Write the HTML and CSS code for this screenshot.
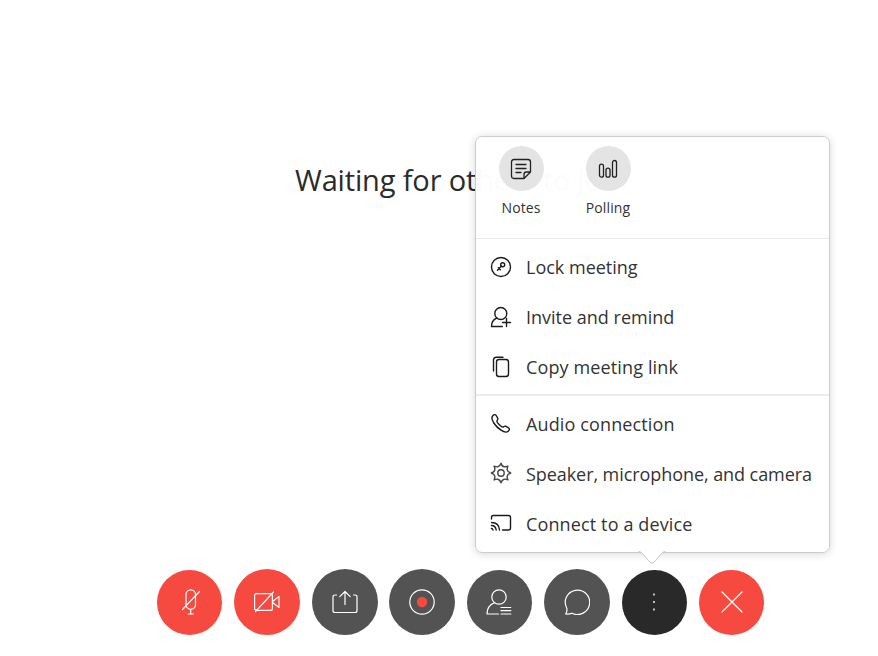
FILE: index.html
```
<!DOCTYPE html>
<html lang="en">
<head>
<meta charset="utf-8">
<title>Meeting</title>
<link rel="stylesheet" href="styles.css">
</head>
<body>
<main class="stage">
  <h1 class="status">Waiting for others to join</h1>
  <nav class="controls">
    <button class="ctl red" aria-label="Unmute"><svg width="26" height="26" viewBox="0 0 26 26"><rect x="9" y=".8" width="9.500" height="19.500" rx="4.700"/><path d="M5.500 20.500 22.500 2.500M13.700 20.500v4M11 25h5.400"/></svg></button>
    <button class="ctl red big" aria-label="Start video"><svg width="26" height="26" viewBox="0 0 26 26"><rect x=".6" y="4.600" width="17.800" height="16.800" rx="2"/><path d="m18.500 12.500 6.500-5v11l-6.500-5M1.500 22.500 19.500 3"/></svg></button>
    <button class="ctl wide" aria-label="Share"><svg width="26" height="26" viewBox="0 0 26 26"><path d="M4.500 6H3Q1 6 1 8v13.500q0 2 2 2h20q2 0 2-2V8q0-2-2-2h-1.500M13 15.500V2.500M7.800 7.700 13 2.500l5.200 5.200"/></svg></button>
    <button class="ctl wide" aria-label="Record"><svg width="26" height="26" viewBox="0 0 26 26"><circle cx="13" cy="13" r="12.200"/><circle class="dot" cx="13" cy="13" r="5.200"/></svg></button>
    <button class="ctl" aria-label="Participants"><svg width="26" height="26" viewBox="0 0 26 26"><circle cx="13" cy="8" r="7.200"/><path d="M8.500 13.800C4 15.500 1 19 1 25h11.500M15 18.500h9.800M15 21.700h9.800M15 25h9.800"/></svg></button>
    <button class="ctl wide" aria-label="Chat"><svg width="26" height="26" viewBox="0 0 26 26"><path d="M8 24.200A12.200 12.200 0 1 0 2.800 19.200C3.300 21.500 2.800 23.200 1.700 25 4 25.200 6 25 8 24.200Z"/></svg></button>
    <button class="ctl dark" aria-label="More options"><svg width="26" height="26" viewBox="0 0 26 26"><path class="pips" d="M12.300 4.500h1.400v2h-1.400zM12.300 12h1.400v2h-1.400zM12.300 19.500h1.400v2h-1.400z"/></svg></button>
    <button class="ctl red" aria-label="Leave"><svg width="26" height="26" viewBox="0 0 26 26"><path d="m3 3 20 20M23 3 3 23"/></svg></button>
  </nav>
</main>
<aside class="menu">
  <div class="tools">
    <div class="tool"><span class="disc"><svg width="22" height="22" viewBox="0 0 22 22"><path d="M14 20.500H4Q1.500 20.500 1.500 18V4Q1.500 1.500 4 1.500h14q2.500 0 2.500 2.500v10L14 20.500V16.500q0-2.500 2.500-2.500h4M6 6.500h10M6 10.500h10M6 14.500h5"/></svg></span><span class="label">Notes</span></div>
    <div class="tool"><span class="disc"><svg width="22" height="22" viewBox="0 0 22 22"><rect x="2.500" y="6.200" width="4" height="13" rx="2"/><rect x="9" y="10.200" width="4" height="9" rx="2"/><rect x="15.500" y="2.500" width="4" height="16.700" rx="2"/></svg></span><span class="label">Polling</span></div>
  </div>
  <ul class="group">
    <li><svg width="22" height="22" viewBox="0 0 22 22"><circle cx="11" cy="11" r="9.500"/><circle cx="12.700" cy="8.700" r="2"/><path d="m11.300 10.200-3.800 4M8.300 11.700l2 2"/></svg><span>Lock meeting</span></li>
    <li><svg width="22" height="22" viewBox="0 0 22 22"><circle cx="10.800" cy="7.500" r="6"/><path d="M6.800 12C3.500 13.300 1.500 16 1.500 20.500h10.800M12.500 16.500h8M16.500 12.500v8"/></svg><span>Invite and remind</span></li>
    <li><svg width="22" height="22" viewBox="0 0 22 22"><rect x="6.500" y="3.500" width="12" height="17" rx="2.500"/><path d="M3.500 15V4q0-2.700 2.700-2.700H13"/></svg><span class="loose">Copy meeting link</span></li>
  </ul>
  <ul class="group second">
    <li><svg class="up" width="22" height="22" viewBox="0 0 22 22"><path d="M3 3.500C4 2.500 5.500 2.300 6.200 3.500l1.600 2.800c.6 1.200-.8 2-.9 2.800-.1 1.500 4.600 6 6 6 .9-.1 1.600-1.500 2.800-.9l2.800 1.600c1.200.7 1 2.200 0 3.200-2 2-4.500 1.200-7.500-.8-3-2-5.300-4.300-7.200-7.200C1.800 8 1 5.500 3 3.500Z"/></svg><span class="loose">Audio connection</span></li>
    <li><svg class="gear up" width="22" height="22" viewBox="0 0 22 22"><circle cx="11" cy="11" r="3.200"/><path d="M11 1.300Q12 4.700 14.200 4.800 16 4.900 17.900 4.100 16.900 6.500 17.200 7.800 17.700 9.800 20.700 11 17.500 12 17.200 14.200 17 16 17.900 17.900 15.500 16.900 14.200 17.200 12 17.700 11 20.700 10 17.500 7.800 17.200 6 17 4.100 17.900 5.100 15.500 4.800 14.200 4.300 12 1.300 11 4.500 10 4.800 7.800 5 6 4.100 4.100 6.500 5.100 7.800 4.800 10 4.300 11 1.300Z"/></svg><span class="tight">Speaker, microphone, and camera</span></li>
    <li><svg class="up" width="22" height="22" viewBox="0 0 22 22"><path d="M1.500 7V5.500Q1.500 3.500 3.500 3.500h15q2 0 2 2V16q0 2-2 2H12.500M1.500 10.500q7.500 0 8 7.500M1.500 13.500q4 0 4.700 4.500M1.500 16.500q1 .2 1.500 1.500"/></svg><span class="loose">Connect to a device</span></li>
  </ul>
  <svg class="tail" width="30" height="15" viewBox="0 0 30 15"><path class="tail-fill" d="M2 0 13 12.300Q15 14.300 17 12.300L28 0Z"/><path class="tail-line" d="M2 1.500Q3.500 1.500 5 3L13 12.300Q15 14.300 17 12.300L25 3Q26.500 1.500 28 1.500"/></svg>
</aside>
</body>
</html>
```
FILE: styles.css
```
* { box-sizing: border-box; }
body {
  margin: 0;
  background: #fff;
  font-family: "Open Sans", "Noto Sans", sans-serif;
}
.stage {
  height: 656px;
  display: flex;
  flex-direction: column;
  justify-content: space-between;
  padding: 159px 0 21px;
}
.status {
  margin: 0 0 0 295px;
  font-size: 29px;
  line-height: 42px;
  font-weight: 400;
  color: #2b2b2b;
  white-space: nowrap;
  letter-spacing: -.15px;
}
.controls {
  display: grid;
  grid-template-columns: repeat(8, 77.450px);
  justify-items: center;
  align-items: center;
  height: 66px;
  margin-left: 150.950px;
}
.ctl {
  display: grid;
  place-items: center;
  width: 65px;
  height: 65px;
  padding: 0;
  border: 0;
  border-radius: 50%;
  background: #535353;
}
.ctl.red { background: #f6493f; }
.ctl.dark { background: #292929; }
.ctl.big, .ctl.wide { width: 66px; height: 66px; }
svg { display: block; fill: none; stroke-linecap: round; stroke-linejoin: round; }
.ctl svg { stroke: #fff; stroke-width: 1.200; }
.ctl .dot { fill: #f6493f; stroke: none; }
.ctl .pips { fill: #fff; stroke: none; }
.menu {
  position: absolute;
  left: 475px;
  top: 136px;
  width: 355px;
  height: 417px;
  border: 1px solid #ccc;
  border-radius: 7px;
  background: rgba(255, 255, 255, .985);
  box-shadow: 0 1px 8px rgba(0, 0, 0, .16);
  color: #333;
}
.tools {
  display: flex;
  gap: 17px;
  height: 102px;
  padding: 9px 0 0 10px;
  border-bottom: 1px solid #e8e8e8;
}
.tool {
  display: flex;
  flex-direction: column;
  align-items: center;
  width: 70px;
}
.disc {
  display: grid;
  place-items: center;
  width: 45px;
  height: 45px;
  border-radius: 50%;
  background: #e4e4e4;
}
.disc svg { stroke: #222; stroke-width: 1.300; }
.label { margin-top: 7px; font-size: 14px; line-height: 20px; letter-spacing: .1px; }
.group {
  margin: 0;
  padding: 3px 0 2px;
  list-style: none;
}
.group.second { border-top: 2px solid #ececec; padding: 3px 0; }
.group li {
  display: flex;
  align-items: center;
  gap: 14px;
  height: 50px;
  padding-left: 14px;
  font-size: 18px;
  white-space: nowrap;
}
.group .loose { letter-spacing: .13px; }
.group .tight { letter-spacing: -.07px; }
.group svg { stroke: #1b1b1b; stroke-width: 1.400; }
.group .up { margin-top: -2px; }
.group .gear { stroke: #444; }
.tail { position: absolute; left: 161px; top: 413px; }
.tail-fill { fill: #fff; }
.tail-line { stroke: #c8c8c8; stroke-width: 1; }
```
